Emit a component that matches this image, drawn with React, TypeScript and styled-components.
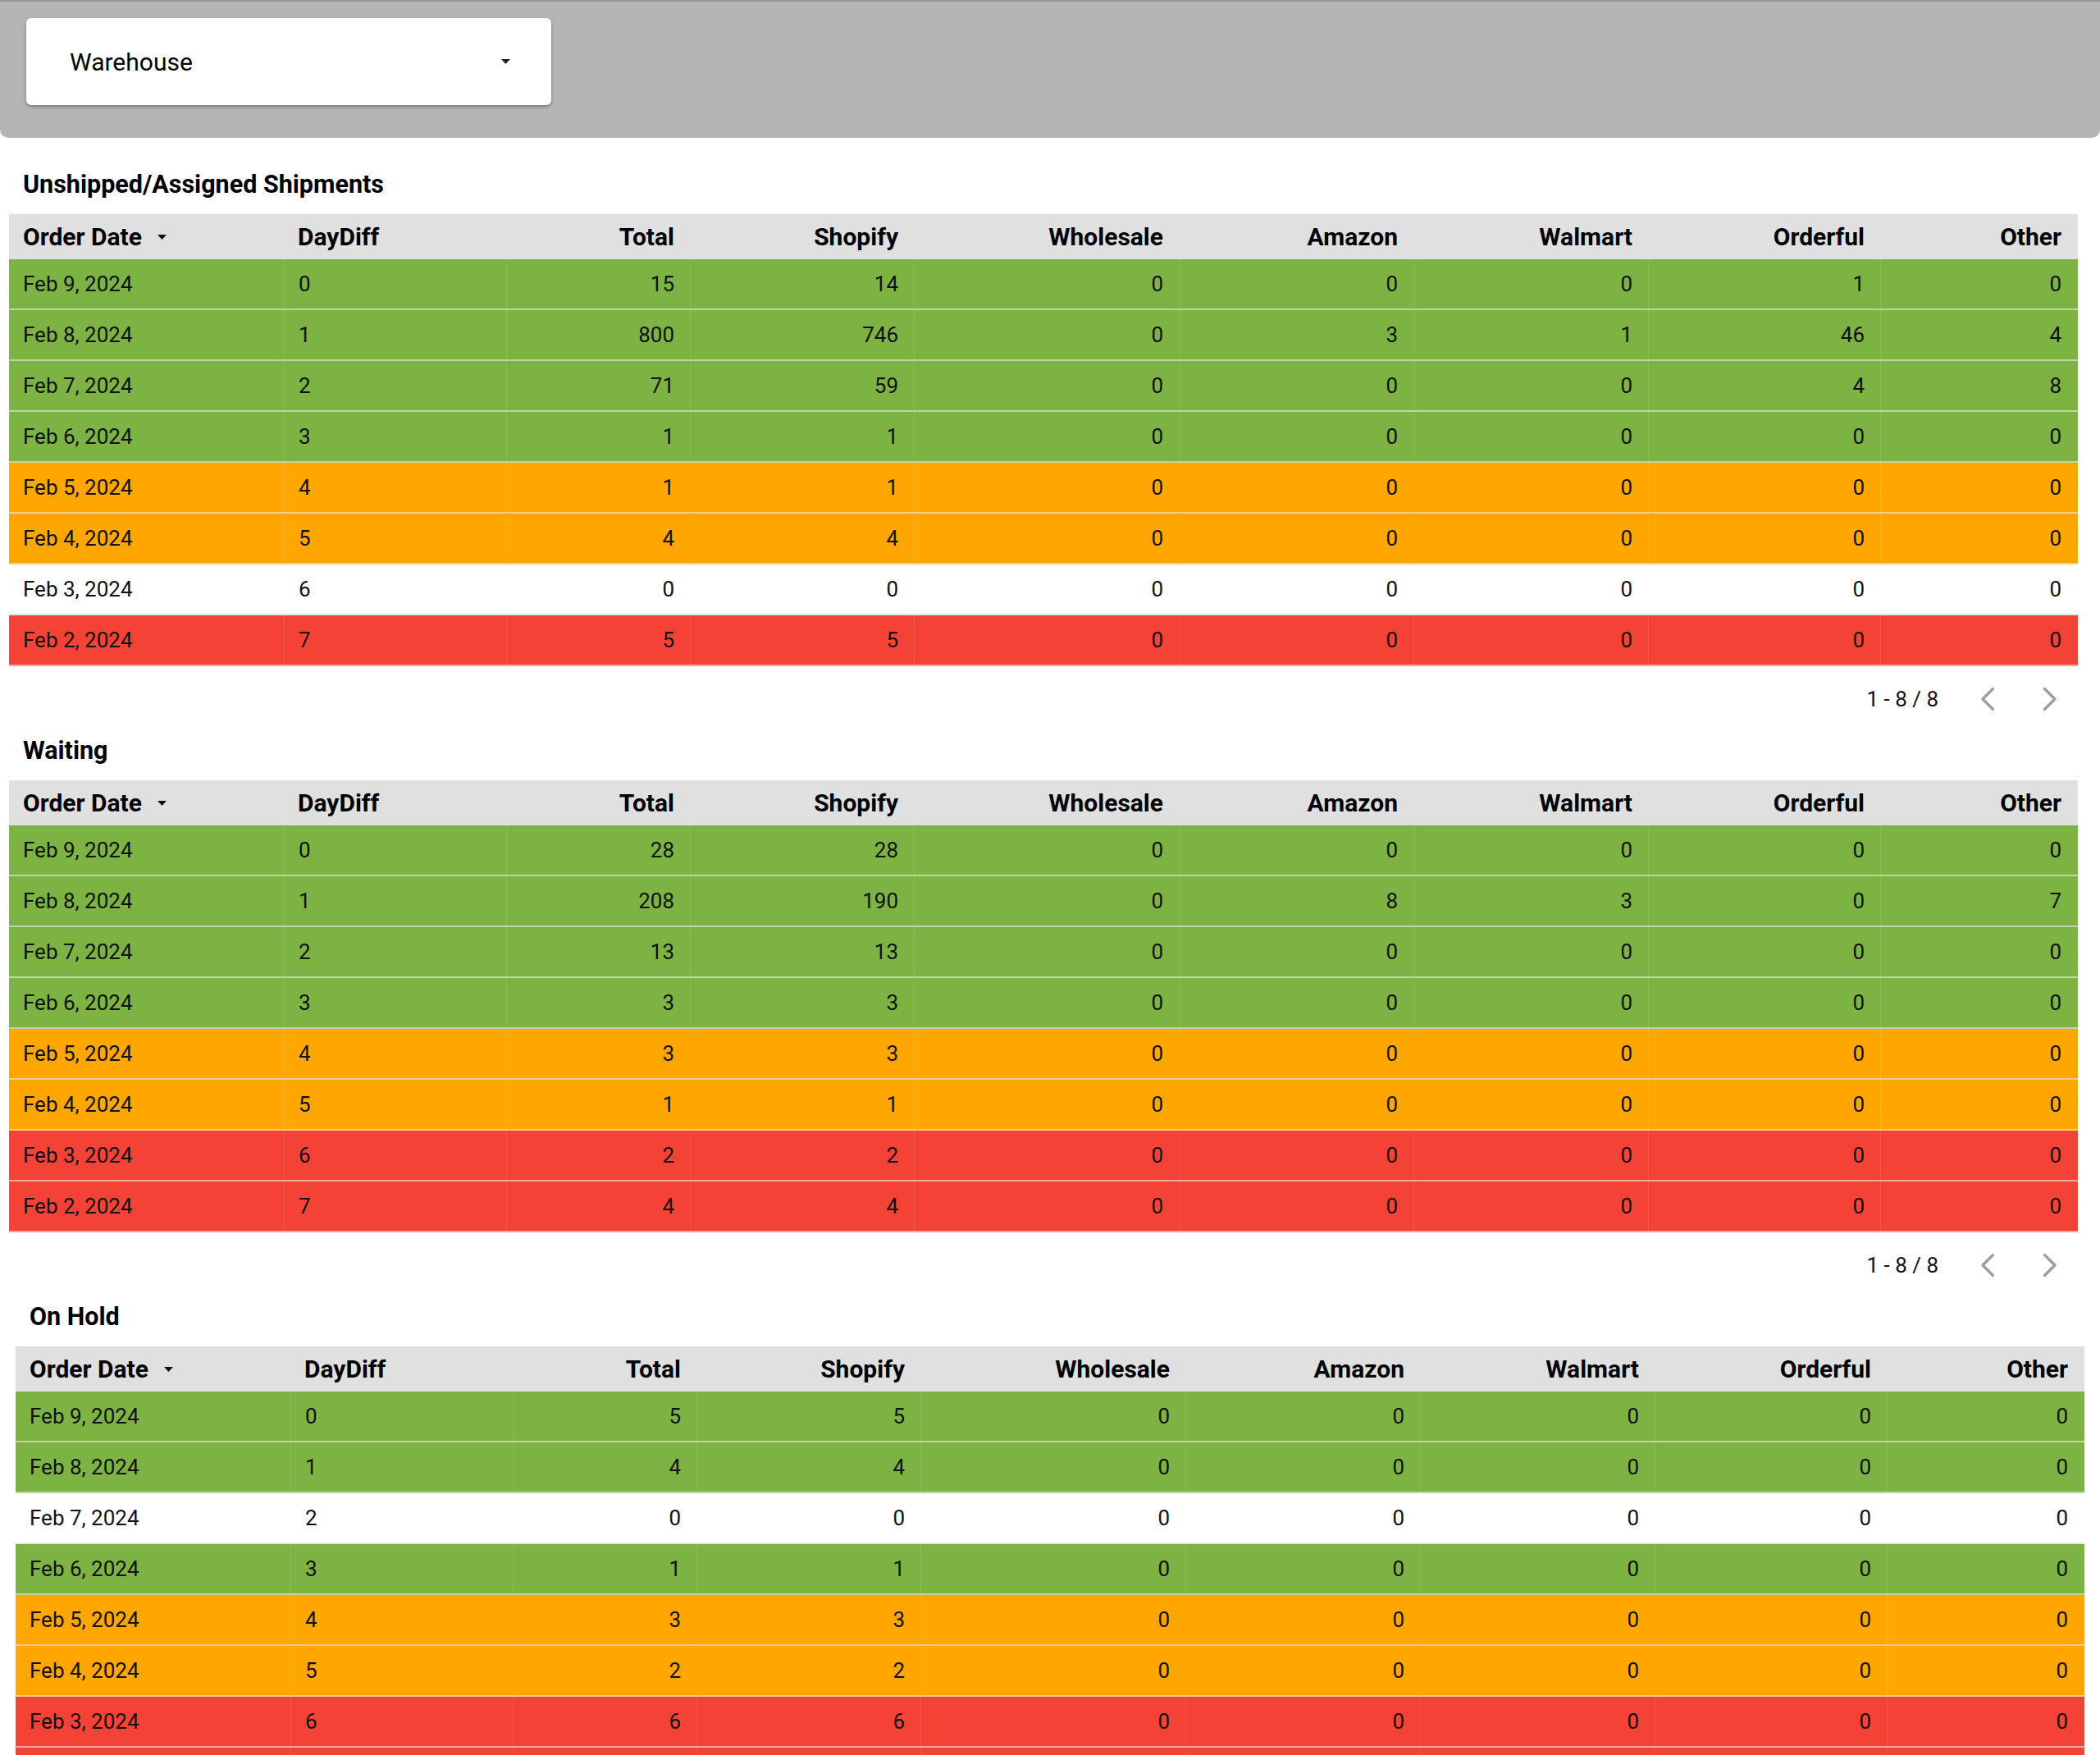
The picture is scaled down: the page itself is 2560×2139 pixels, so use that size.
import React from 'react';
import styled, { createGlobalStyle } from 'styled-components';

const GlobalStyle = createGlobalStyle`
  html, body { margin: 0; padding: 0; background: #ffffff; }
  body { font-family: Roboto, "Liberation Sans", Arial, sans-serif; color: #000; }
  * { box-sizing: border-box; }
`;

const COLS = '335px 271px 224px 273px 323px 286px 286px 283px 240px';

type Tone = 'green' | 'orange' | 'red' | 'white';
const toneColor: Record<Tone, string> = {
  green: '#7cb342',
  orange: '#ffa600',
  red: '#f44336',
  white: '#ffffff',
};

const Page = styled.div`
  width: 2560px;
  min-height: 2139px;
  background: #fff;
`;

const TopBar = styled.header`
  height: 168px;
  background: #b5b5b5;
  border-top: 2px solid #979797;
  border-radius: 0 0 10px 10px;
  padding: 20px 0 0 32px;
`;

const Dropdown = styled.div`
  width: 640px;
  height: 106px;
  background: #fff;
  border-radius: 6px;
  box-shadow: 0 2px 4px rgba(0, 0, 0, 0.35);
  display: flex;
  align-items: center;
  justify-content: space-between;
  padding: 0 50px 0 53px;
  font-size: 30px;
  color: #000;
`;

const Content = styled.main`
  padding-top: 37px;
  display: flex;
  flex-direction: column;
`;

const Section = styled.section<{ $inset: number }>`
  margin-left: ${(p) => p.$inset}px;
  width: 2522px;
  display: flex;
  flex-direction: column;
`;

const Title = styled.h2`
  margin: 0 0 16px 0;
  padding-left: 17px;
  height: 40px;
  line-height: 40px;
  font-size: 30.5px;
  font-weight: 700;
  color: #000;
`;

const Grid = styled.div`
  display: flex;
  flex-direction: column;
`;

const HeadRow = styled.div`
  display: grid;
  grid-template-columns: ${COLS};
  height: 55px;
  background: #e0e0e0;
`;

const HeadCell = styled.div<{ $right?: boolean }>`
  display: flex;
  align-items: center;
  justify-content: ${(p) => (p.$right ? 'flex-end' : 'flex-start')};
  padding: 0 19px 0 17px;
  font-size: 30px;
  font-weight: 700;
  color: #000;
  white-space: nowrap;
`;

const SortMark = styled.svg`
  margin-left: 19px;
  width: 11px;
  height: 6px;
`;

const Row = styled.div<{ $tone: Tone }>`
  display: grid;
  grid-template-columns: ${COLS};
  height: 62px;
  background: ${(p) => toneColor[p.$tone]};
  border-bottom: 2px solid
    ${(p) => (p.$tone === 'white' ? 'rgba(200,200,200,0.45)' : 'rgba(235,235,235,0.6)')};
`;

const Cell = styled.div<{ $right?: boolean; $first?: boolean }>`
  display: flex;
  align-items: center;
  justify-content: ${(p) => (p.$right ? 'flex-end' : 'flex-start')};
  padding: 0 19px 0 17px;
  font-size: 26px;
  color: #111;
  white-space: nowrap;
  border-left: ${(p) => (p.$first ? 'none' : '1px solid rgba(255,255,255,0.1)')};
`;

const Pager = styled.div`
  height: 83px;
  padding: 0 10px 3px 0;
  display: flex;
  align-items: center;
  justify-content: flex-end;
`;

const PagerText = styled.span`
  font-size: 26px;
  color: #111;
  margin-right: 36px;
`;

const PagerButton = styled.button`
  width: 48px;
  height: 40px;
  border: none;
  background: transparent;
  padding: 0;
  display: flex;
  align-items: center;
  justify-content: center;
  & + & {
    margin-left: 28px;
  }
`;

const Chevron = ({ dir }: { dir: 'left' | 'right' }) => (
  <svg width="18" height="30" viewBox="0 0 18 30" fill="none">
    <polyline
      points={dir === 'left' ? '15.5,2.5 3,15 15.5,27.5' : '2.5,2.5 15,15 2.5,27.5'}
      stroke="#9e9e9e"
      strokeWidth="3.4"
      strokeLinecap="round"
      strokeLinejoin="round"
    />
  </svg>
);

const headers = ['Order Date', 'DayDiff', 'Total', 'Shopify', 'Wholesale', 'Amazon', 'Walmart', 'Orderful', 'Other'];

type DataRow = { date: string; tone: Tone; v: number[] };

const zeros = (dd: number, total: number, shop: number): number[] => [dd, total, shop, 0, 0, 0, 0, 0];

const tables: { title: string; inset: number; rows: DataRow[] }[] = [
  {
    title: 'Unshipped/Assigned Shipments',
    inset: 11,
    rows: [
      { date: 'Feb 9, 2024', tone: 'green', v: [0, 15, 14, 0, 0, 0, 1, 0] },
      { date: 'Feb 8, 2024', tone: 'green', v: [1, 800, 746, 0, 3, 1, 46, 4] },
      { date: 'Feb 7, 2024', tone: 'green', v: [2, 71, 59, 0, 0, 0, 4, 8] },
      { date: 'Feb 6, 2024', tone: 'green', v: zeros(3, 1, 1) },
      { date: 'Feb 5, 2024', tone: 'orange', v: zeros(4, 1, 1) },
      { date: 'Feb 4, 2024', tone: 'orange', v: zeros(5, 4, 4) },
      { date: 'Feb 3, 2024', tone: 'white', v: zeros(6, 0, 0) },
      { date: 'Feb 2, 2024', tone: 'red', v: zeros(7, 5, 5) },
    ],
  },
  {
    title: 'Waiting',
    inset: 11,
    rows: [
      { date: 'Feb 9, 2024', tone: 'green', v: zeros(0, 28, 28) },
      { date: 'Feb 8, 2024', tone: 'green', v: [1, 208, 190, 0, 8, 3, 0, 7] },
      { date: 'Feb 7, 2024', tone: 'green', v: zeros(2, 13, 13) },
      { date: 'Feb 6, 2024', tone: 'green', v: zeros(3, 3, 3) },
      { date: 'Feb 5, 2024', tone: 'orange', v: zeros(4, 3, 3) },
      { date: 'Feb 4, 2024', tone: 'orange', v: zeros(5, 1, 1) },
      { date: 'Feb 3, 2024', tone: 'red', v: zeros(6, 2, 2) },
      { date: 'Feb 2, 2024', tone: 'red', v: zeros(7, 4, 4) },
    ],
  },
  {
    title: 'On Hold',
    inset: 19,
    rows: [
      { date: 'Feb 9, 2024', tone: 'green', v: zeros(0, 5, 5) },
      { date: 'Feb 8, 2024', tone: 'green', v: zeros(1, 4, 4) },
      { date: 'Feb 7, 2024', tone: 'white', v: zeros(2, 0, 0) },
      { date: 'Feb 6, 2024', tone: 'green', v: zeros(3, 1, 1) },
      { date: 'Feb 5, 2024', tone: 'orange', v: zeros(4, 3, 3) },
      { date: 'Feb 4, 2024', tone: 'orange', v: zeros(5, 2, 2) },
      { date: 'Feb 3, 2024', tone: 'red', v: zeros(6, 6, 6) },
      { date: 'Feb 2, 2024', tone: 'red', v: zeros(7, 2, 2) },
    ],
  },
];

export default function App() {
  return (
    <Page>
      <GlobalStyle />
      <TopBar>
        <Dropdown>
          <span>Warehouse</span>
          <svg width="11" height="6" viewBox="0 0 11 6">
            <polygon points="0,0 11,0 5.5,6" fill="#222" />
          </svg>
        </Dropdown>
      </TopBar>
      <Content>
        {tables.map((t) => (
          <Section key={t.title} $inset={t.inset}>
            <Title>{t.title}</Title>
            <Grid>
              <HeadRow>
                {headers.map((h, i) => (
                  <HeadCell key={h} $right={i > 1}>
                    {h}
                    {i === 0 && (
                      <SortMark viewBox="0 0 11 6">
                        <polygon points="0,0 11,0 5.5,6" fill="#111" />
                      </SortMark>
                    )}
                  </HeadCell>
                ))}
              </HeadRow>
              {t.rows.map((r) => (
                <Row key={r.date} $tone={r.tone}>
                  <Cell $first>{r.date}</Cell>
                  {r.v.map((n, i) => (
                    <Cell key={i} $right={i > 0}>
                      {n}
                    </Cell>
                  ))}
                </Row>
              ))}
            </Grid>
            <Pager>
              <PagerText>1 - 8 / 8</PagerText>
              <PagerButton aria-label="Previous page">
                <Chevron dir="left" />
              </PagerButton>
              <PagerButton aria-label="Next page">
                <Chevron dir="right" />
              </PagerButton>
            </Pager>
          </Section>
        ))}
      </Content>
    </Page>
  );
}
